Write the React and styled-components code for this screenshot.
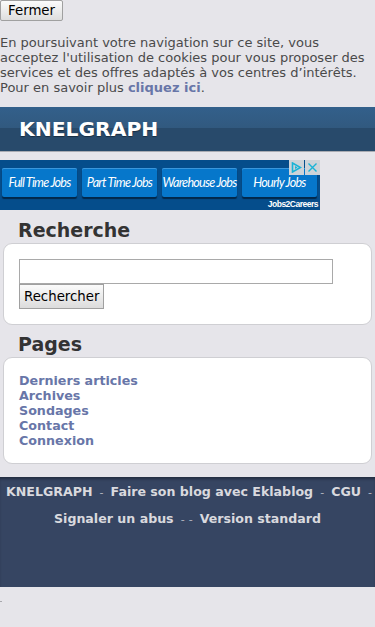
import React from "react";
import styled, { createGlobalStyle } from "styled-components";

const GlobalStyle = createGlobalStyle`
  html, body {
    margin: 0;
    padding: 0;
    background: #e6e5ea;
  }
  body {
    font-family: "DejaVu Sans", Verdana, sans-serif;
    font-size: 13px;
    color: #444;
  }
`;

const Page = styled.div`
  width: 375px;
  overflow: hidden;
`;

const CloseButton = styled.button`
  display: block;
  margin: 0;
  height: 21px;
  padding: 1px 7px;
  font: 13.33px "DejaVu Sans", sans-serif;
  color: #000;
  background: linear-gradient(#fbfbfb, #dedede);
  border: 1px solid #a0a0a0;
  border-radius: 2px;
`;

const Notice = styled.p`
  margin: 14px 0 12px;
  font-size: 13px;
  line-height: 15px;
  color: #4a4a4a;
`;

const NoticeLink = styled.a`
  color: #6876a8;
  font-weight: bold;
  text-decoration: none;
`;

const Header = styled.div`
  height: 44px;
  display: flex;
  align-items: center;
  padding-left: 19px;
  background: linear-gradient(#33608b 0, #31597f 21px, #284a6b 21px, #284a6b 100%);
  border-bottom: 1px solid #a9abb2;
`;

const SiteTitle = styled.h1`
  margin: 0;
  font-size: 20.3px;
  font-weight: bold;
  color: #fff;
  text-shadow: 0 1px 1px rgba(0, 0, 0, 0.4);
`;

const Ad = styled.div`
  position: relative;
  width: 320px;
  height: 50px;
  margin: 8px 0 0;
  background: #054d8b;
  display: flex;
  gap: 5px;
  padding: 8px 0 0 2px;
  box-sizing: border-box;
`;

const AdButton = styled.div`
  width: 75px;
  height: 29px;
  display: flex;
  align-items: center;
  justify-content: center;
  background: #0677cb;
  border-radius: 2px;
  box-shadow: 0 1px 0 #3b97dc inset, 0 2px 1px #02284a;
  color: #fff;
  font-family: Lato, "Open Sans", sans-serif;
  font-style: italic;
  font-size: 12.6px;
  letter-spacing: -0.75px;
  white-space: nowrap;
`;

const AdIcons = styled.div`
  position: absolute;
  top: 0;
  right: 0;
  display: flex;
  gap: 1px;
`;

const AdIcon = styled.div`
  width: 15px;
  height: 15px;
  background: #cdd3d8;
  display: flex;
  align-items: center;
  justify-content: center;
`;

const AdBrand = styled.span`
  position: absolute;
  right: 2px;
  bottom: 1px;
  color: #fff;
  font-family: "Liberation Sans", sans-serif;
  font-weight: bold;
  font-size: 8.5px;
  letter-spacing: -0.5px;
`;

const WidgetTitle = styled.h2`
  margin: 0;
  padding: ${props => (props.first ? "9px" : "8px")} 18px 2px;
  font-size: 19px;
  line-height: 22px;
  font-weight: bold;
  color: #333;
`;

const WidgetBox = styled.div`
  margin: 0 3px;
  padding: 15px;
  background: #fff;
  border: 1px solid #cfcfd3;
  border-radius: 9px;
`;

const SearchInput = styled.input`
  display: block;
  width: 314px;
  height: 25px;
  margin: 0;
  padding: 0 3px;
  box-sizing: border-box;
  border: 1px solid #a9a9a9;
  background: #fff;
`;

const SearchButton = styled.button`
  display: block;
  height: 25px;
  margin: 0;
  padding: 1px 4px;
  font: 13.33px "DejaVu Sans", sans-serif;
  color: #000;
  background: linear-gradient(#fbfbfb, #dcdcdc);
  border: 1px solid #a0a0a0;
`;

const PageList = styled.ul`
  list-style: none;
  margin: 0;
  padding: 0;
`;

const PageLink = styled.a`
  display: block;
  font-size: 12.7px;
  line-height: 15px;
  font-weight: bold;
  color: #6876a8;
  text-decoration: none;
`;

const Footer = styled.div`
  margin-top: 13px;
  height: 110px;
  box-sizing: border-box;
  padding-top: 2px;
  background: #364562;
  box-shadow: inset 0 3px 3px -1px rgba(0, 0, 0, 0.35);
  text-align: center;
`;

const FooterLine = styled.div`
  line-height: 26px;
  white-space: nowrap;
  font-size: 12.6px;
`;

const FooterLink = styled.a`
  color: #d9d9de;
  font-weight: bold;
  text-decoration: none;
  padding: 0 3px;
`;

const Sep = styled.span`
  color: #b3b6c0;
  font-size: 11px;
`;

const Dot = styled.div`
  width: 2px;
  height: 1px;
  margin-top: 14px;
  background: #a8a8ad;
`;

const pages = ["Derniers articles", "Archives", "Sondages", "Contact", "Connexion"];
const jobs = ["Full Time Jobs", "Part Time Jobs", "Warehouse Jobs", "Hourly Jobs"];

export default function App() {
  return (
    <Page>
      <GlobalStyle />
      <CloseButton>Fermer</CloseButton>
      <Notice>
        En poursuivant votre navigation sur ce site, vous acceptez l'utilisation de cookies pour
        vous proposer des services et des offres adaptés à vos centres d’intérêts. Pour en savoir
        plus <NoticeLink href="#">cliquez ici</NoticeLink>.
      </Notice>

      <Header>
        <SiteTitle>KNELGRAPH</SiteTitle>
      </Header>

      <Ad>
        {jobs.map(job => (
          <AdButton key={job}>{job}</AdButton>
        ))}
        <AdIcons>
          <AdIcon>
            <svg width="11" height="11" viewBox="0 0 11 11">
              <path d="M1.5 1 V10 L9.5 5.5 Z" fill="none" stroke="#19b3d6" strokeWidth="1.6" />
              <path d="M4 4 V7 L6.5 5.5 Z" fill="#19b3d6" />
            </svg>
          </AdIcon>
          <AdIcon>
            <svg width="11" height="11" viewBox="0 0 11 11">
              <path d="M1.5 1.5 L9.5 9.5 M9.5 1.5 L1.5 9.5" stroke="#19b3d6" strokeWidth="1.4" />
            </svg>
          </AdIcon>
        </AdIcons>
        <AdBrand>Jobs2Careers</AdBrand>
      </Ad>

      <WidgetTitle first>Recherche</WidgetTitle>
      <WidgetBox>
        <SearchInput type="text" />
        <SearchButton>Rechercher</SearchButton>
      </WidgetBox>

      <WidgetTitle>Pages</WidgetTitle>
      <WidgetBox>
        <PageList>
          {pages.map(p => (
            <li key={p}>
              <PageLink href="#">{p}</PageLink>
            </li>
          ))}
        </PageList>
      </WidgetBox>

      <Footer>
        <FooterLine>
          <FooterLink href="#">KNELGRAPH</FooterLink> <Sep>-</Sep>{" "}
          <FooterLink href="#">Faire son blog avec Eklablog</FooterLink> <Sep>-</Sep>{" "}
          <FooterLink href="#">CGU</FooterLink> <Sep>-</Sep>
        </FooterLine>
        <FooterLine>
          <FooterLink href="#">Signaler un abus</FooterLink> <Sep>-</Sep> <Sep>-</Sep>{" "}
          <FooterLink href="#">Version standard</FooterLink>
        </FooterLine>
      </Footer>
      <Dot />
    </Page>
  );
}
